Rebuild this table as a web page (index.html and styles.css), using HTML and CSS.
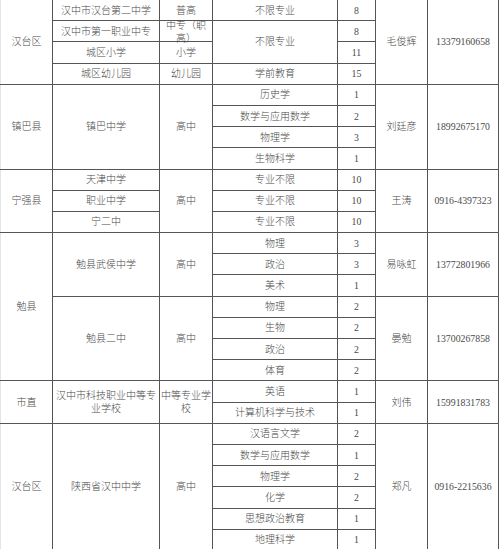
FILE: index.html
```html
<!DOCTYPE html>
<html lang="zh">
<head>
<meta charset="utf-8">
<link rel="stylesheet" href="styles.css">
</head>
<body>
<table class="sheet">
  <colgroup>
    <col class="c-area"><col class="c-school"><col class="c-type"><col class="c-major"><col class="c-num"><col class="c-name"><col class="c-tel">
  </colgroup>
  <tbody>
    <tr><td rowspan="4">汉台区</td><td>汉中市汉台第二中学</td><td>普高</td><td>不限专业</td><td class="n">8</td><td rowspan="4">毛俊辉</td><td rowspan="4" class="n">13379160658</td></tr>
    <tr><td>汉中市第一职业中专</td><td><span class="squeeze">中专（职高）</span></td><td rowspan="2">不限专业</td><td class="n">8</td></tr>
    <tr><td>城区小学</td><td>小学</td><td class="n">11</td></tr>
    <tr><td>城区幼儿园</td><td>幼儿园</td><td>学前教育</td><td class="n">15</td></tr>

    <tr class="sec"><td rowspan="4">镇巴县</td><td rowspan="4">镇巴中学</td><td rowspan="4">高中</td><td>历史学</td><td class="n">1</td><td rowspan="4">刘廷彦</td><td rowspan="4" class="n">18992675170</td></tr>
    <tr><td>数学与应用数学</td><td class="n">2</td></tr>
    <tr><td>物理学</td><td class="n">3</td></tr>
    <tr><td>生物科学</td><td class="n">1</td></tr>

    <tr class="sec"><td rowspan="3">宁强县</td><td>天津中学</td><td rowspan="3">高中</td><td>专业不限</td><td class="n">10</td><td rowspan="3">王涛</td><td rowspan="3" class="n">0916-4397323</td></tr>
    <tr><td>职业中学</td><td>专业不限</td><td class="n">10</td></tr>
    <tr><td>宁二中</td><td>专业不限</td><td class="n">10</td></tr>

    <tr class="sec"><td rowspan="7">勉县</td><td rowspan="3">勉县武侯中学</td><td rowspan="3">高中</td><td>物理</td><td class="n">3</td><td rowspan="3">易咏虹</td><td rowspan="3" class="n">13772801966</td></tr>
    <tr><td>政治</td><td class="n">3</td></tr>
    <tr><td>美术</td><td class="n">1</td></tr>
    <tr><td rowspan="4">勉县二中</td><td rowspan="4">高中</td><td>物理</td><td class="n">2</td><td rowspan="4">晏勉</td><td rowspan="4" class="n">13700267858</td></tr>
    <tr><td>生物</td><td class="n">2</td></tr>
    <tr><td>政治</td><td class="n">2</td></tr>
    <tr><td>体育</td><td class="n">2</td></tr>

    <tr class="sec"><td rowspan="2">市直</td><td rowspan="2" class="wrap">汉中市科技职业中等专业学校</td><td rowspan="2" class="wrap">中等专业学校</td><td>英语</td><td class="n">1</td><td rowspan="2">刘伟</td><td rowspan="2" class="n">15991831783</td></tr>
    <tr><td>计算机科学与技术</td><td class="n">1</td></tr>

    <tr class="sec"><td rowspan="6">汉台区</td><td rowspan="6">陕西省汉中中学</td><td rowspan="6">高中</td><td>汉语言文学</td><td class="n">2</td><td rowspan="6">郑凡</td><td rowspan="6" class="n">0916-2215636</td></tr>
    <tr><td>数学与应用数学</td><td class="n">1</td></tr>
    <tr><td>物理学</td><td class="n">2</td></tr>
    <tr><td>化学</td><td class="n">2</td></tr>
    <tr><td>思想政治教育</td><td class="n">1</td></tr>
    <tr><td>地理科学</td><td class="n">1</td></tr>
  </tbody>
</table>
</body>
</html>
```

FILE: styles.css
```css
html, body {
  margin: 0;
  padding: 0;
  background: #ffffff;
}

.sheet {
  border-collapse: collapse;
  table-layout: fixed;
  width: 498px;
  margin: -1px 0 0 0;
  font-family: "Liberation Serif", "Noto Sans CJK SC", serif;
  font-size: 10px;
  font-weight: 300;
  color: #4a4a4a;
}

.c-area { width: 52px; }
.c-school { width: 107px; }
.c-type { width: 53px; }
.c-major { width: 125px; }
.c-num { width: 38px; }
.c-name { width: 52px; }
.c-tel { width: 71px; }

.sheet tr {
  height: 21.2px;
}

.sheet td {
  border: 1px solid #555555;
  padding: 0 1px;
  text-align: center;
  vertical-align: middle;
  line-height: 13px;
  white-space: normal;
  overflow: visible;
}

.sheet tr td:first-child {
  border-left-color: #e4e4e4;
}

.sheet .n {
  font-size: 9.8px;
  font-weight: 400;
}

.sheet .wrap {
  line-height: 13px;
}

.squeeze {
  display: block;
  height: 24px;
  margin: -2px 0;
  line-height: 13px;
}
```
